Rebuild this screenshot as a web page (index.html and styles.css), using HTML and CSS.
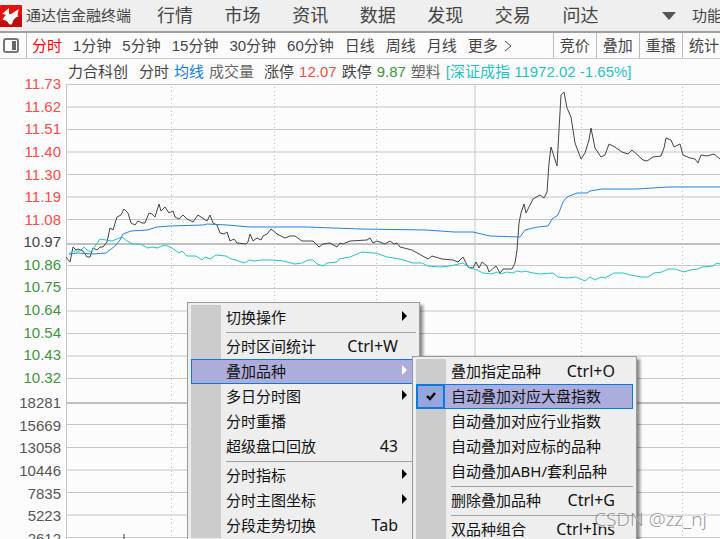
FILE: index.html
```html
<!DOCTYPE html>
<html lang="zh-CN">
  <head>
    <meta charset="utf-8">
    <title>通达信金融终端</title>
    <link rel="stylesheet" href="styles.css">
  </head>
  <body>
    <header class="top-bar">
      <svg class="logo" width="22" height="22" viewBox="0 0 22 22">
        <rect width="22" height="22" rx="1" fill="#e8100c"/>
        <path d="M0 16 L22 10 V22 H0z" fill="#c00c0a"/>
        <path d="M2 9 L9 3 L9 8 Q9 10 11 9 L19 4 Q16 12 19 11 Q13 13 12 19 Q11 20 9 19 Q7 15 3 15 Q2 14 6 10 Q4 9 2 9z" fill="#fff"/>
      </svg>
      <span class="app-name">通达信金融终端</span>
      <nav class="main-nav">
        <a href="#">行情</a>
        <a href="#">市场</a>
        <a href="#">资讯</a>
        <a href="#">数据</a>
        <a href="#">发现</a>
        <a href="#">交易</a>
        <a href="#">问达</a>
      </nav>
      <button class="drop-button" aria-label="更多菜单">
        <svg width="14" height="8" viewBox="0 0 14 8"><path d="M0 0 H14 L7 8z" fill="#555"/></svg>
      </button>
      <a class="function-link" href="#">功能</a>
    </header>

    <div class="toolbar">
      <button class="panel-button" aria-label="侧栏">
        <svg width="16" height="15" viewBox="0 0 16 15">
          <rect x="1" y="1" width="14" height="13" rx="2" fill="#fff" stroke="#777" stroke-width="2"/>
          <rect x="9" y="3" width="4" height="9" fill="#666"/>
        </svg>
      </button>
      <div class="periods">
        <button class="active">分时</button>
        <button>1分钟</button>
        <button>5分钟</button>
        <button>15分钟</button>
        <button>30分钟</button>
        <button>60分钟</button>
        <button>日线</button>
        <button>周线</button>
        <button>月线</button>
        <button class="more">更多
          <svg width="8" height="12" viewBox="0 0 8 12"><path d="M1 1 L7 6 L1 11" fill="none" stroke="#444"/></svg>
        </button>
      </div>
      <div class="tools">
        <button>竞价</button>
        <button>叠加</button>
        <button>重播</button>
        <button>统计</button>
      </div>
    </div>

    <main class="quote">
      <div class="axis">
        <ul class="price-axis">
          <li class="up">11.73</li>
          <li class="up">11.62</li>
          <li class="up">11.51</li>
          <li class="up">11.40</li>
          <li class="up">11.30</li>
          <li class="up">11.19</li>
          <li class="up">11.08</li>
          <li>10.97</li>
          <li class="down">10.86</li>
          <li class="down">10.75</li>
          <li class="down">10.64</li>
          <li class="down">10.54</li>
          <li class="down">10.43</li>
          <li class="down">10.32</li>
        </ul>
        <ul class="volume-axis">
          <li>18281</li>
          <li>15669</li>
          <li>13058</li>
          <li>10446</li>
          <li>7835</li>
          <li>5223</li>
          <li>2612</li>
        </ul>
      </div>

      <section class="chart-area">
        <div class="chart-info">
          <span class="stock-name">力合科创</span>
          <span>分时</span>
          <span class="average">均线</span>
          <span class="volume">成交量</span>
          <span>涨停</span>
          <span class="up">12.07</span>
          <span>跌停</span>
          <span class="down">9.87</span>
          <span class="sector">塑料</span>
          <span class="index">[深证成指 11972.02 -1.65%]</span>
        </div>
        <svg class="chart">
          <g class="grid-lines">
            <line x1="0" x2="100%" y1="0.5" y2="0.5"/>
            <line x1="0" x2="100%" y1="23" y2="23"/>
            <line x1="0" x2="100%" y1="45.5" y2="45.5"/>
            <line x1="0" x2="100%" y1="68" y2="68"/>
            <line x1="0" x2="100%" y1="90.5" y2="90.5"/>
            <line x1="0" x2="100%" y1="113" y2="113"/>
            <line x1="0" x2="100%" y1="135.5" y2="135.5"/>
            <line class="thick" x1="0" x2="100%" y1="160" y2="160"/>
            <line x1="0" x2="100%" y1="181.5" y2="181.5"/>
            <line x1="0" x2="100%" y1="204.5" y2="204.5"/>
            <line x1="0" x2="100%" y1="227" y2="227"/>
            <line x1="0" x2="100%" y1="249.5" y2="249.5"/>
            <line x1="0" x2="100%" y1="272" y2="272"/>
            <line x1="0" x2="100%" y1="294.5" y2="294.5"/>
            <line class="thick" x1="0" x2="100%" y1="319" y2="319"/>
            <line x1="0" x2="100%" y1="340.5" y2="340.5"/>
            <line x1="0" x2="100%" y1="363.5" y2="363.5"/>
            <line x1="0" x2="100%" y1="386" y2="386"/>
            <line x1="0" x2="100%" y1="408.5" y2="408.5"/>
            <line x1="0" x2="100%" y1="431" y2="431"/>
            <line x1="0" x2="100%" y1="453.5" y2="453.5"/>
            <line x1="0.5" x2="0.5" y1="0" y2="100%"/>
            <line x1="409" x2="409" y1="0" y2="100%"/>
          </g>
          <g class="time-lines">
            <line x1="105.5" x2="105.5" y1="3" y2="100%"/>
            <line x1="208.5" x2="208.5" y1="3" y2="100%"/>
            <line x1="310.5" x2="310.5" y1="3" y2="100%"/>
            <line x1="515.5" x2="515.5" y1="3" y2="100%"/>
            <line x1="616.5" x2="616.5" y1="3" y2="100%"/>
          </g>
          <line class="price-line" x1="58" x2="58" y1="450" y2="100%"/>
          <polyline class="price-line" points="0,173 4,178 7,163 10,166 12,165 17,167 21,173 24,173 27,164 31,166 34,163 37,163 41,158 44,144 47,146 51,133 55,131 58,125 62,129 65,139 69,141 72,137 76,139 79,139 83,129 86,130 89,133 93,120 95,127 99,123 103,129 107,127 109,133 113,135 117,131 121,135 127,138 132,131 141,137 144,131 147,139 151,141 154,149 158,150 161,148 164,157 168,155 171,159 180,160 182,158 184,150 187,157 191,154 195,156 197,152 201,150 205,145 211,150 219,154 224,152 229,152 236,157 247,157 253,163 257,160 264,159 271,163 274,159 277,160 284,157 301,156 304,154 307,159 311,157 319,160 324,157 328,160 331,159 334,163 346,166 362,175 366,172 376,175 387,176 392,178 397,173 402,183 407,184 410,178 413,184 416,178 421,182 423,188 430,182 434,189 437,185 446,185 449,179 451,166 453,139 455,129 458,120 460,129 467,115 474,111 478,114 481,108 483,79 485,63 491,82 493,46 495,11 498,8 501,24 505,33 509,59 515,75 519,69 523,56 525,44 529,64 535,73 539,71 543,60 549,63 556,68 562,70 566,66 577,76 581,77 587,73 595,72 598,64 600,54 605,56 608,63 614,60 617,71 624,74 629,75 632,79 635,71 641,72 648,70 654,75"/>
          <polyline class="index-line" points="3,170 7,167 14,167 18,163 21,166 25,168 34,155 46,157 56,153 61,157 67,160 74,160 82,164 86,163 91,164 96,162 99,161 106,164 113,169 116,167 121,172 130,172 136,176 139,173 144,175 150,171 160,172 165,175 170,176 178,179 184,176 188,177 196,176 206,176 217,177 229,180 236,179 242,176 247,176 251,180 257,182 261,179 271,178 273,175 284,173 296,168 306,169 310,169 321,173 334,175 347,179 356,179 362,182 374,183 384,182 397,179 404,184 411,186 417,189 426,190 431,188 434,190 441,188 447,189 451,187 456,188 459,187 467,189 474,190 487,189 492,193 501,194 510,193 519,197 524,193 529,196 535,193 539,194 548,189 557,189 564,191 576,193 582,193 588,189 596,188 602,185 609,185 618,188 624,186 632,185 636,183 647,182 651,179 654,180"/>
          <polyline class="average-line" points="3,170 11,169 27,170 40,169 49,162 54,156 57,150 65,147 81,146 91,143 104,142 137,141 141,140 161,141 184,143 240,143 295,145 360,146 388,148 407,148 424,152 454,153 459,146 467,144 472,143 482,142 486,135 492,131 497,118 501,113 511,109 521,109 524,107 536,105 571,105 602,103 654,103"/>
        </svg>
      </section>
    </main>

    <div class="menu context-menu" role="menu">
      <button class="menu-item has-sub" role="menuitem">切换操作</button>
      <hr>
      <button class="menu-item" role="menuitem">分时区间统计<kbd>Ctrl+W</kbd></button>
      <button class="menu-item has-sub selected" role="menuitem">叠加品种</button>
      <button class="menu-item has-sub" role="menuitem">多日分时图</button>
      <button class="menu-item" role="menuitem">分时重播</button>
      <button class="menu-item" role="menuitem">超级盘口回放<kbd>43</kbd></button>
      <hr>
      <button class="menu-item has-sub" role="menuitem">分时指标</button>
      <button class="menu-item has-sub" role="menuitem">分时主图坐标</button>
      <button class="menu-item" role="menuitem">分段走势切换<kbd>Tab</kbd></button>
    </div>

    <div class="menu sub-menu" role="menu">
      <button class="menu-item" role="menuitem">叠加指定品种<kbd>Ctrl+O</kbd></button>
      <button class="menu-item selected" role="menuitemcheckbox" aria-checked="true">
        <span class="check">
          <svg width="10" height="9" viewBox="0 0 10 9"><path d="M1 4 L4 7 L9 1" fill="none" stroke="#000" stroke-width="2.4"/></svg>
        </span>自动叠加对应大盘指数
      </button>
      <button class="menu-item" role="menuitem">自动叠加对应行业指数</button>
      <button class="menu-item" role="menuitem">自动叠加对应标的品种</button>
      <button class="menu-item" role="menuitem">自动叠加ABH/套利品种</button>
      <hr>
      <button class="menu-item" role="menuitem">删除叠加品种<kbd>Ctrl+G</kbd></button>
      <hr>
      <button class="menu-item" role="menuitem">双品种组合<kbd>Ctrl+Ins</kbd></button>
    </div>

    <div class="watermark">CSDN @zz_nj</div>
  </body>
</html>
```

FILE: styles.css
```css
*{
  box-sizing: border-box;
}
body{
  position: relative;
  display: flex;
  flex-direction: column;
  height: 100vh;
  margin: 0;
  overflow: hidden;
  background-color: #fcfcfc;
  color: #444;
  font-family: "Liberation Sans", "Noto Sans CJK SC", sans-serif;
  font-size: 15px;
  line-height: 20px;
}
button{
  padding: 0;
  border: none;
  background: none;
  color: inherit;
  font: inherit;
  white-space: nowrap;
  cursor: pointer;
}
a{
  color: inherit;
  text-decoration: none;
}
ul{
  margin: 0;
  padding: 0;
  list-style: none;
}
svg{
  display: block;
  flex: none;
}
.up{
  color: #ff4848;
}
.down{
  color: #3c963c;
}

/* title row */
.top-bar{
  display: flex;
  flex: none;
  align-items: center;
  height: 33px;
  border-bottom: 2px solid #a0a0a0;
  background-color: #efefef;
  white-space: nowrap;
}
.app-name{
  margin-left: 4px;
}
.main-nav{
  display: grid;
  grid-template-columns: repeat(7, 1fr);
  flex: none;
  width: 473px;
  margin-left: 26px;
  font-size: 18px;
}
.drop-button{
  margin-left: 32px;
}
.function-link{
  margin-left: 16px;
}

/* period row */
.toolbar{
  display: flex;
  flex: none;
  height: 26px;
  border-bottom: 1px solid #c8c8c8;
}
.panel-button{
  flex: none;
  width: 27px;
  padding-left: 3px;
  border-right: 1px solid #bbb;
}
.periods{
  display: flex;
  flex: none;
  gap: 11px;
  padding-left: 5px;
}
.periods .active{
  color: #f00;
}
.more{
  display: flex;
  align-items: center;
  gap: 6px;
}
.tools{
  display: flex;
  flex: none;
  margin-left: 41px;
}
.tools button{
  padding: 0 6px;
  border-left: 1px solid #bbb;
}

/* chart */
.quote{
  display: grid;
  grid-template-columns: 66px 1fr;
  flex: 1;
  min-height: 0;
}
.axis{
  padding: 14px 5px 0 0;
  text-align: right;
}
.price-axis,
.volume-axis{
  display: grid;
  grid-auto-rows: 1fr;
  align-items: center;
}
.price-axis{
  height: 316px;
}
.volume-axis{
  height: 158px;
  margin-top: 3px;
  color: #555;
}
.chart-area{
  display: flex;
  flex-direction: column;
  min-width: 0;
  min-height: 0;
}
.chart-info{
  display: flex;
  flex: none;
  align-items: center;
  gap: 5px;
  height: 25px;
  padding-left: 2px;
  white-space: nowrap;
}
.stock-name{
  margin-right: 6px;
}
.average{
  color: #0a7fe6;
}
.volume{
  margin-right: 5px;
  color: #666;
}
.sector{
  color: #666;
}
.index{
  color: #1cc4c4;
}
.chart{
  flex: 1;
  width: 100%;
  min-height: 0;
}
.grid-lines line{
  stroke: #c6c6c6;
}
.grid-lines .thick{
  stroke: #c0c0c0;
  stroke-width: 2;
}
.time-lines line{
  stroke: #bbb;
  stroke-dasharray: 1 3;
}
.price-line,
.index-line,
.average-line{
  fill: none;
  stroke: #444;
}
.index-line{
  stroke: #20c8c4;
}
.average-line{
  stroke: #2585dc;
}

/* right click menus */
.menu{
  position: absolute;
  padding: 2px 3px;
  border: 1px solid #999;
  background: linear-gradient(to right, #ccc 30px, #eee 30px) content-box, #eee;
  box-shadow: 3px 3px 3px rgba(0, 0, 0, .45);
  color: #111;
  font-family: "Noto Sans", "Noto Sans CJK SC", sans-serif;
}
.context-menu{
  top: 302px;
  left: 187px;
  width: 233px;
}
.sub-menu{
  top: 356px;
  left: 412px;
  width: 225px;
}
.menu-item{
  position: relative;
  display: flex;
  align-items: center;
  width: 100%;
  height: 25px;
  padding: 0 18px 2px 35px;
}
.menu-item kbd{
  margin-left: auto;
  font: inherit;
  font-size: 16px;
}
.menu hr{
  height: 1px;
  margin: 2px 0 1px 35px;
  border: none;
  background-color: #a0a0a0;
}
.selected{
  background-color: #adaddd;
  box-shadow: inset 0 0 0 1px #0a7adc;
}
.has-sub::after{
  content: "";
  margin: 0 -9px 2px auto;
  border: 5px solid transparent;
  border-right: none;
  border-left-color: #000;
}
.has-sub.selected::after{
  border-left-color: #fff;
}
.check{
  position: absolute;
  top: 0;
  left: 0;
  display: flex;
  align-items: center;
  justify-content: center;
  width: 29px;
  height: 25px;
  border: 2px solid #0a7adc;
  background-color: #96a6dc;
}
.watermark{
  position: absolute;
  right: 13px;
  bottom: 10px;
  color: rgba(110, 110, 110, .7);
  font-family: "Noto Sans", sans-serif;
  font-size: 19px;
  font-weight: 300;
  text-shadow: 1px 1px 0 rgba(255, 255, 255, .8);
}
```
